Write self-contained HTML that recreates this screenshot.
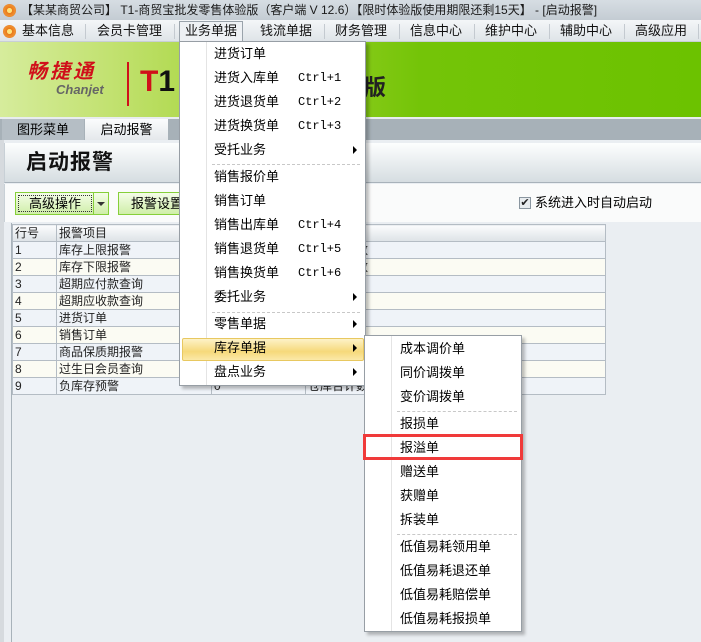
<!DOCTYPE html><html><head><meta charset="utf-8"><style>
*{margin:0;padding:0;box-sizing:border-box}
body{width:701px;height:642px;overflow:hidden;position:relative;background:#eaeef2;font-family:"Liberation Sans","Noto Sans CJK SC","WenQuanYi Zen Hei",sans-serif;font-size:12px;color:#000}
.a{position:absolute;white-space:nowrap}
.title{left:0;top:0;width:701px;height:20px;background:linear-gradient(#d6dde3,#c4ccd3);color:#1a1a1a;font-size:12px;line-height:20px;padding-left:21px}
.ico{width:13px;height:13px;border-radius:50%;background:radial-gradient(circle,#ffe27a 25%,#e8781a 30%,#f09030 60%,#c85a10);}
.menubar{left:0;top:20px;width:701px;height:22px;background:linear-gradient(#f4f6f8,#dfe4e8);border-bottom:1px solid #c8cfd6}
.mi{top:0;height:22px;line-height:22px;font-size:13px;color:#111}
.sepv{top:4px;width:1px;height:15px;background:#c4cad0}
.banner{left:0;top:42px;width:701px;height:75px;background:linear-gradient(90deg,#d6ec9c 0%,#bfe06a 18%,#9ad02a 40%,#74c408 60%,#6cc200 100%)}
.tabs{left:0;top:117px;width:701px;height:23px;background:#a7b1b8;border-top:2px solid #e8ecef}
.menu{background:#fff;border:1px solid #979ea5;box-shadow:3px 3px 3px rgba(0,0,0,.25)}
.it{position:absolute;left:34px;font-size:13px;line-height:16px;color:#000}
.sc{position:absolute;left:118px;font-family:"Liberation Mono","DejaVu Sans Mono",monospace;font-size:12px;line-height:16px}
.arr{position:absolute;left:173px;width:0;height:0;border-left:4px solid #000;border-top:4px solid transparent;border-bottom:4px solid transparent}
.dsep{position:absolute;height:0;border-top:1px dashed #c8c8c8}
table{border-collapse:collapse;position:absolute;left:12px;top:224px}
td{border:1px solid #b4bcc4;height:17px;font-size:12px;padding-left:2px;line-height:15px;color:#222;white-space:nowrap;overflow:hidden}
tr.o td{background:#eff3f8}tr.e td{background:#fbfbf3}
</style></head><body>
<div class="a title">【某某商贸公司】 T1-商贸宝批发零售体验版（客户端 V 12.6）【限时体验版使用期限还剩15天】 - [启动报警]</div>
<div class="a ico" style="left:3px;top:4px"></div>
<div class="a menubar">
<div class="a ico" style="left:3px;top:5px"></div>
<div class="a mi" style="left:22px">基本信息</div><div class="a sepv" style="left:85px"></div>
<div class="a mi" style="left:97px">会员卡管理</div><div class="a sepv" style="left:174px"></div>
<div class="a" style="left:179px;top:1px;width:64px;height:21px;border:1px solid #9aa3ab;border-bottom:none;background:#eef1f4"></div>
<div class="a mi" style="left:185px">业务单据</div>
<div class="a mi" style="left:260px">钱流单据</div><div class="a sepv" style="left:324px"></div>
<div class="a mi" style="left:335px">财务管理</div><div class="a sepv" style="left:399px"></div>
<div class="a mi" style="left:410px">信息中心</div><div class="a sepv" style="left:474px"></div>
<div class="a mi" style="left:485px">维护中心</div><div class="a sepv" style="left:549px"></div>
<div class="a mi" style="left:560px">辅助中心</div><div class="a sepv" style="left:624px"></div>
<div class="a mi" style="left:635px">高级应用</div><div class="a sepv" style="left:698px"></div>
</div>
<div class="a banner">
<div class="a" style="left:27px;top:18px;font-size:20px;line-height:24px;font-weight:bold;font-style:italic;color:#d0101a;letter-spacing:3px">畅捷通</div>
<div class="a" style="left:56px;top:41px;font-size:13px;line-height:14px;font-weight:bold;font-style:italic;color:#666">Chanjet</div>
<div class="a" style="left:127px;top:20px;width:2px;height:44px;background:#d0101a"></div>
<div class="a" style="left:140px;top:24px;font-size:30px;font-weight:bold;color:#d0101a;line-height:32px">T<span style="color:#111">1</span></div>
<div class="a" style="left:364px;top:28px;font-size:22px;font-weight:bold;color:#222">版</div>
</div>
<div class="a tabs">
<div class="a" style="left:2px;top:0;width:82px;height:21px;background:#b5bec5;text-align:center;line-height:21px;font-size:13px">图形菜单</div>
<div class="a" style="left:85px;top:0;width:83px;height:21px;background:linear-gradient(#fbfcfd,#e4e8eb);text-align:center;line-height:21px;font-size:13px">启动报警</div>
</div>
<div class="a" style="left:0;top:140px;width:4px;height:502px;background:#d6dade"></div>
<div class="a" style="left:4px;top:143px;width:697px;height:40px;background:linear-gradient(#fdfefe,#d6dde1);border-bottom:1px solid #a8b2ba;border-left:1px solid #c8d0d6"></div>
<div class="a" style="left:26px;top:148px;font-size:21px;font-weight:bold;color:#111;line-height:30px;letter-spacing:1px">启动报警</div>
<div class="a" style="left:4px;top:184px;width:697px;height:38px;background:#fafbfb;border-left:1px solid #c8d0d6"></div>
<div class="a" style="left:15px;top:192px;width:94px;height:23px;border:1px solid #86cf3a;background:linear-gradient(#f4fde8,#cfeea8)"></div>
<div class="a" style="left:18px;top:195px;width:74px;height:17px;border:1px dotted #333;text-align:center;line-height:15px;font-size:13px">高级操作</div>
<div class="a" style="left:93px;top:192px;width:1px;height:23px;background:#86cf3a"></div>
<div class="a" style="left:97px;top:202px;border-top:4px solid #333;border-left:4px solid transparent;border-right:4px solid transparent"></div>
<div class="a" style="left:118px;top:192px;width:70px;height:23px;border:1px solid #86cf3a;background:linear-gradient(#f4fde8,#cfeea8);line-height:21px;padding-left:12px;font-size:13px;overflow:hidden">报警设置</div>
<div class="a" style="left:519px;top:197px;width:12px;height:12px;border:1px solid #8a96a0;background:#e8ecef;font-size:11px;line-height:10px;text-align:center;color:#222">✔</div>
<div class="a" style="left:535px;top:195px;font-size:13px;line-height:16px">系统进入时自动启动</div>
<div class="a" style="left:11px;top:223px;width:1px;height:419px;background:#a8b2ba"></div>
<table>
<tr><td style="width:44px;background:linear-gradient(#fbfcfd,#dde2e6)">行号</td><td style="width:155px;background:linear-gradient(#fbfcfd,#dde2e6)">报警项目</td><td style="width:94px;background:linear-gradient(#fbfcfd,#dde2e6)"></td><td style="width:300px;background:linear-gradient(#fbfcfd,#dde2e6)"></td></tr>
<tr class="o"><td>1</td><td>库存上限报警</td><td></td><td>量报警条数</td></tr>
<tr class="e"><td>2</td><td>库存下限报警</td><td></td><td>量报警条数</td></tr>
<tr class="o"><td>3</td><td>超期应付款查询</td><td></td><td></td></tr>
<tr class="e"><td>4</td><td>超期应收款查询</td><td></td><td></td></tr>
<tr class="o"><td>5</td><td>进货订单</td><td></td><td></td></tr>
<tr class="e"><td>6</td><td>销售订单</td><td></td><td></td></tr>
<tr class="o"><td>7</td><td>商品保质期报警</td><td></td><td></td></tr>
<tr class="e"><td>8</td><td>过生日会员查询</td><td></td><td></td></tr>
<tr class="o"><td>9</td><td>负库存预警</td><td>0</td><td>仓库合计数</td></tr>
</table>
<div class="a menu" style="left:179px;top:41px;width:187px;height:345px">
<div class="a" style="left:26px;top:0;width:1px;height:343px;background:#e4e4e4"></div>
<div class="it" style="top:4px">进货订单</div>
<div class="it" style="top:28px">进货入库单</div><div class="sc" style="top:28px">Ctrl+1</div>
<div class="it" style="top:52px">进货退货单</div><div class="sc" style="top:52px">Ctrl+2</div>
<div class="it" style="top:76px">进货换货单</div><div class="sc" style="top:76px">Ctrl+3</div>
<div class="it" style="top:100px">受托业务</div><div class="arr" style="top:104px"></div>
<div class="dsep" style="left:32px;top:122px;width:148px"></div>
<div class="it" style="top:127px">销售报价单</div>
<div class="it" style="top:151px">销售订单</div>
<div class="it" style="top:175px">销售出库单</div><div class="sc" style="top:175px">Ctrl+4</div>
<div class="it" style="top:199px">销售退货单</div><div class="sc" style="top:199px">Ctrl+5</div>
<div class="it" style="top:223px">销售换货单</div><div class="sc" style="top:223px">Ctrl+6</div>
<div class="it" style="top:247px">委托业务</div><div class="arr" style="top:251px"></div>
<div class="dsep" style="left:32px;top:270px;width:148px"></div>
<div class="it" style="top:274px">零售单据</div><div class="arr" style="top:278px"></div>
<div class="a" style="left:2px;top:296px;width:182px;height:23px;border:1px solid #e8c860;border-radius:2px;background:linear-gradient(#fdf2c8,#f6d97a 60%,#fbe9a8)"></div>
<div class="it" style="top:298px">库存单据</div><div class="arr" style="top:302px"></div>
<div class="it" style="top:322px">盘点业务</div><div class="arr" style="top:326px"></div>
</div>
<div class="a menu" style="left:364px;top:335px;width:158px;height:297px">
<div class="a" style="left:26px;top:0;width:1px;height:295px;background:#e4e4e4"></div>
<div class="it" style="left:35px;top:5px">成本调价单</div>
<div class="it" style="left:35px;top:29px">同价调拨单</div>
<div class="it" style="left:35px;top:53px">变价调拨单</div>
<div class="dsep" style="left:32px;top:75px;width:120px"></div>
<div class="it" style="left:35px;top:80px">报损单</div>
<div class="it" style="left:35px;top:104px">报溢单</div>
<div class="it" style="left:35px;top:128px">赠送单</div>
<div class="it" style="left:35px;top:152px">获赠单</div>
<div class="it" style="left:35px;top:176px">拆装单</div>
<div class="dsep" style="left:32px;top:198px;width:120px"></div>
<div class="it" style="left:35px;top:203px">低值易耗领用单</div>
<div class="it" style="left:35px;top:227px">低值易耗退还单</div>
<div class="it" style="left:35px;top:251px">低值易耗赔偿单</div>
<div class="it" style="left:35px;top:275px">低值易耗报损单</div>
</div>
<div class="a" style="left:363px;top:434px;width:160px;height:26px;border:3px solid #f03a3a"></div>
</body></html>
